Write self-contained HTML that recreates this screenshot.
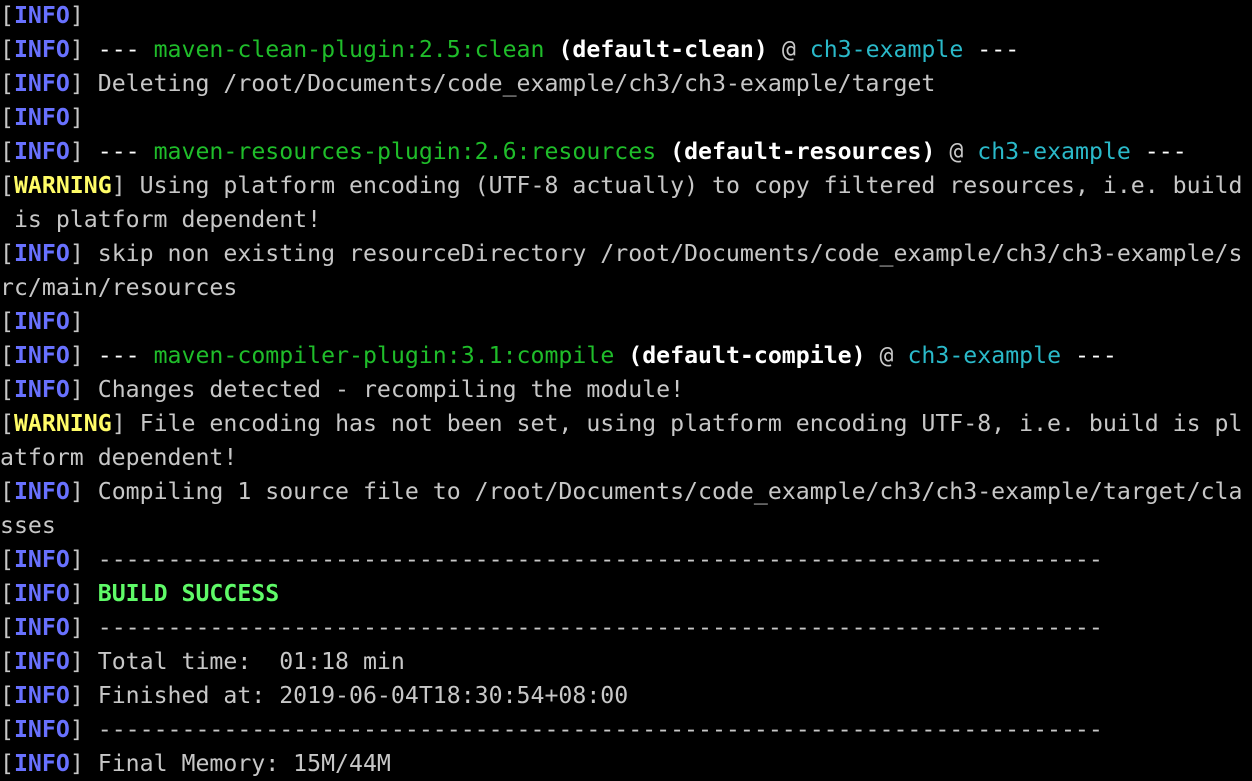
<!DOCTYPE html>
<html><head><meta charset="utf-8"><style>
html,body{margin:0;padding:0;background:#000;width:1252px;height:754px;overflow:hidden}
pre{margin:0;position:absolute;top:-1px;left:0;font-family:"DejaVu Sans Mono","Liberation Mono",monospace;font-size:23.2px;line-height:34px;color:#c7c7c7;white-space:pre}
.i{color:#6871ff;font-weight:bold}.b{color:#c7c7c7}
.g{color:#1fbd2a}.c{color:#2ab9c9}.w{color:#fff;font-weight:bold}.d{color:#fff}
.y{color:#fffc67;font-weight:bold}.s{color:#5ffa68;font-weight:bold}
</style></head><body><pre>[<span class="i">INFO</span>]
[<span class="i">INFO</span>] <span class="d">---</span> <span class="g">maven-clean-plugin:2.5:clean</span> <span class="w">(default-clean)</span> @ <span class="c">ch3-example</span> <span class="d">---</span>
[<span class="i">INFO</span>] Deleting /root/Documents/code_example/ch3/ch3-example/target
[<span class="i">INFO</span>]
[<span class="i">INFO</span>] <span class="d">---</span> <span class="g">maven-resources-plugin:2.6:resources</span> <span class="w">(default-resources)</span> @ <span class="c">ch3-example</span> <span class="d">---</span>
[<span class="y">WARNING</span>] Using platform encoding (UTF-8 actually) to copy filtered resources, i.e. build
 is platform dependent!
[<span class="i">INFO</span>] skip non existing resourceDirectory /root/Documents/code_example/ch3/ch3-example/s
rc/main/resources
[<span class="i">INFO</span>]
[<span class="i">INFO</span>] <span class="d">---</span> <span class="g">maven-compiler-plugin:3.1:compile</span> <span class="w">(default-compile)</span> @ <span class="c">ch3-example</span> <span class="d">---</span>
[<span class="i">INFO</span>] Changes detected - recompiling the module!
[<span class="y">WARNING</span>] File encoding has not been set, using platform encoding UTF-8, i.e. build is pl
atform dependent!
[<span class="i">INFO</span>] Compiling 1 source file to /root/Documents/code_example/ch3/ch3-example/target/cla
sses
[<span class="i">INFO</span>] ------------------------------------------------------------------------
[<span class="i">INFO</span>] <span class="s">BUILD SUCCESS</span>
[<span class="i">INFO</span>] ------------------------------------------------------------------------
[<span class="i">INFO</span>] Total time:  01:18 min
[<span class="i">INFO</span>] Finished at: 2019-06-04T18:30:54+08:00
[<span class="i">INFO</span>] ------------------------------------------------------------------------
[<span class="i">INFO</span>] Final Memory: 15M/44M
</pre></body></html>
